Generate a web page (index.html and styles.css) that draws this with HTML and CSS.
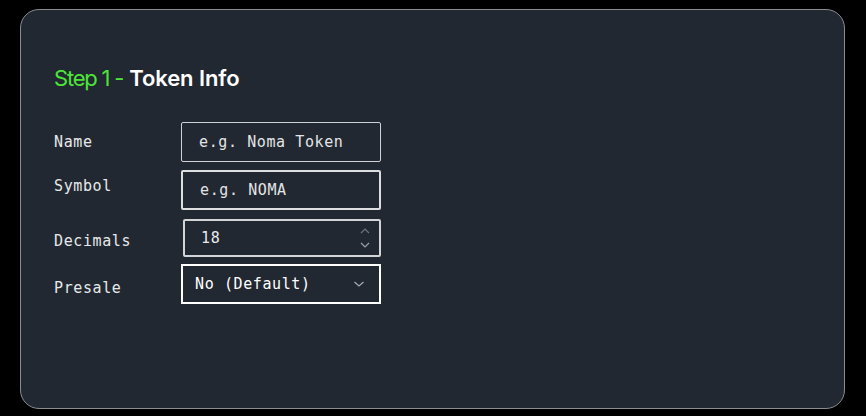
FILE: index.html
```html
<!DOCTYPE html>
<html>
<head>
<meta charset="utf-8">
<link rel="stylesheet" href="styles.css">
</head>
<body>
<div class="card">
  <h2 class="title"><span class="step">Step 1 -</span><span class="name">Token Info</span></h2>
  <div class="form">
    <div class="row">
      <label class="lbl">Name</label>
      <div class="field f-name"><span class="ph">e.g. Noma Token</span></div>
    </div>
    <div class="row">
      <label class="lbl lbl-up">Symbol</label>
      <div class="field f-symbol"><span class="ph">e.g. NOMA</span></div>
    </div>
    <div class="row">
      <label class="lbl lbl-down">Decimals</label>
      <div class="field f-dec"><span class="val">18</span>
        <svg class="spin" width="12" height="26" viewBox="0 0 12 26">
          <path d="M2 8 L6 4 L10 8" fill="none" stroke="#6f747c" stroke-width="1.2"/>
          <path d="M2 18 L6 22 L10 18" fill="none" stroke="#9aa0a8" stroke-width="1.2"/>
        </svg>
      </div>
    </div>
    <div class="row">
      <label class="lbl lbl-down">Presale</label>
      <div class="field f-sel"><span class="val sel">No (Default)</span>
        <svg class="chev" width="12" height="8" viewBox="0 0 12 8">
          <path d="M1.5 2 L6 6 L10.5 2" fill="none" stroke="#a4a9b0" stroke-width="1.3"/>
        </svg>
      </div>
    </div>
  </div>
</div>
</body>
</html>
```

FILE: styles.css
```css
html, body {
  margin: 0;
  padding: 0;
  background: #000;
}
body {
  padding: 9px 21px 0 20px;
}
.card {
  box-sizing: border-box;
  width: 825px;
  height: 400px;
  background: #222831;
  border: 1px solid #8a8c90;
  border-radius: 19px;
  padding: 56px 0 0 32px;
}
.title {
  margin: 0 0 0 1px;
  font-family: "Inter", sans-serif;
  font-size: 22px;
  line-height: 25px;
  white-space: pre;
}
.step {
  color: #4ee53a;
  font-weight: 400;
  letter-spacing: -1.2px;
}
.name {
  color: #ffffff;
  font-weight: 600;
  letter-spacing: -0.1px;
  margin-left: 6px;
}
.form {
  margin-top: 31px;
  display: flex;
  flex-direction: column;
  font-family: "DejaVu Sans Mono", monospace;
  font-size: 15px;
  letter-spacing: 0.6px;
}
.row {
  display: flex;
  align-items: center;
}
.row + .row {
  margin-top: 8px;
}
.row:nth-child(3) { margin-top: 9px; }
.row:nth-child(4) { margin-top: 7px; }
.lbl {
  width: 128px;
  color: #e6e8ea;
  position: relative;
  left: 1px;
}
.lbl-up { top: -4px; }
.lbl-down { top: 3px; }
.row:nth-child(4) .lbl-down { top: 4px; }
.field {
  box-sizing: border-box;
  width: 200px;
  height: 40px;
  border: 1px solid #cfd1d4;
  border-radius: 2px;
  display: flex;
  align-items: center;
  padding-left: 17px;
}
.f-symbol {
  border: 2px solid #dcdee0;
  padding-left: 17px;
}
.f-dec {
  width: 198px;
  height: 38px;
  margin-left: 2px;
  border: 2px solid #d2d4d7;
  padding-left: 16px;
  padding-right: 8px;
  justify-content: space-between;
}
.f-sel {
  border: 2px solid #ffffff;
  border-radius: 0;
  padding-left: 12px;
  padding-right: 14px;
  justify-content: space-between;
}
.ph {
  color: #e2e4e6;
}
.val {
  color: #e8eaec;
}
.sel {
  color: #ffffff;
}
.spin, .chev {
  display: block;
}
```
